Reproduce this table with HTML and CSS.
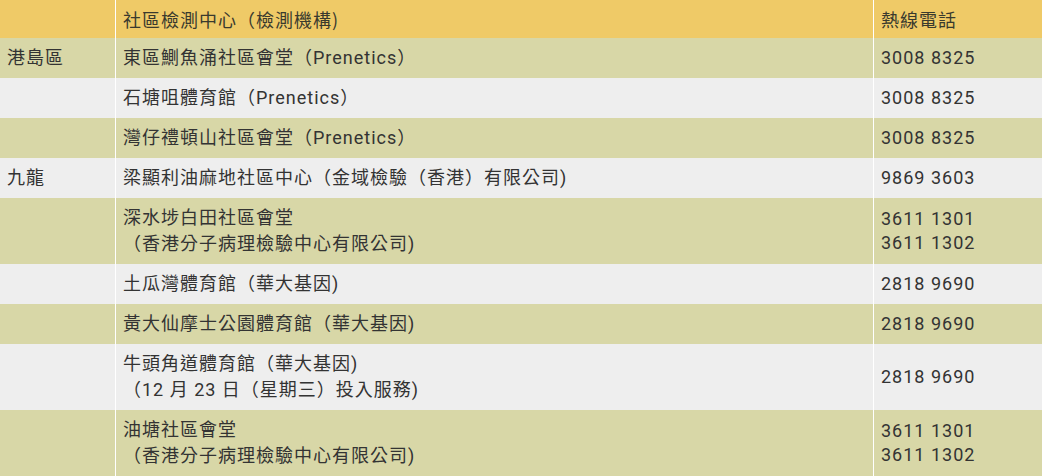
FILE: index.html
```html
<!DOCTYPE html>
<html lang="zh-Hant">
<head>
<meta charset="utf-8">
<title>社區檢測中心</title>
<link rel="stylesheet" href="styles.css">
</head>
<body>
<table class="centres">
  <colgroup>
    <col class="c-district">
    <col class="c-centre">
    <col class="c-phone">
  </colgroup>
  <thead>
    <tr class="head">
      <th></th>
      <th>社區檢測中心（檢測機構)</th>
      <th>熱線電話</th>
    </tr>
  </thead>
  <tbody>
    <tr class="odd">
      <td>港島區</td>
      <td>東區鰂魚涌社區會堂（Prenetics）</td>
      <td class="phone">3008 8325</td>
    </tr>
    <tr class="even">
      <td></td>
      <td>石塘咀體育館（Prenetics）</td>
      <td class="phone">3008 8325</td>
    </tr>
    <tr class="odd">
      <td></td>
      <td>灣仔禮頓山社區會堂（Prenetics）</td>
      <td class="phone">3008 8325</td>
    </tr>
    <tr class="even">
      <td>九龍</td>
      <td>梁顯利油麻地社區中心（金域檢驗（香港）有限公司)</td>
      <td class="phone">9869 3603</td>
    </tr>
    <tr class="odd">
      <td></td>
      <td>深水埗白田社區會堂<br>（香港分子病理檢驗中心有限公司)</td>
      <td class="phone">3611 1301<br>3611 1302</td>
    </tr>
    <tr class="even">
      <td></td>
      <td>土瓜灣體育館（華大基因)</td>
      <td class="phone">2818 9690</td>
    </tr>
    <tr class="odd">
      <td></td>
      <td>黃大仙摩士公園體育館（華大基因)</td>
      <td class="phone">2818 9690</td>
    </tr>
    <tr class="even">
      <td></td>
      <td>牛頭角道體育館（華大基因)<br>（12 月 23 日（星期三）投入服務)</td>
      <td class="phone">2818 9690</td>
    </tr>
    <tr class="odd">
      <td></td>
      <td>油塘社區會堂<br>（香港分子病理檢驗中心有限公司)</td>
      <td class="phone">3611 1301<br>3611 1302</td>
    </tr>
  </tbody>
</table>
</body>
</html>
```

FILE: styles.css
```css
html, body {
  margin: 0;
  padding: 0;
  background: #eeeeee;
}

.centres {
  width: 1042px;
  table-layout: fixed;
  border-collapse: separate;
  border-spacing: 0;
  font-family: Roboto, "Noto Sans CJK TC", sans-serif;
  font-size: 18px;
  line-height: 26px;
  letter-spacing: 1px;
  color: #333333;
}

.c-district { width: 115px; }
.c-centre { width: 758px; }
.c-phone { width: 169px; }

.centres th,
.centres td {
  padding: 7px 7px;
  text-align: left;
  vertical-align: middle;
  font-weight: normal;
}

.centres td.phone {
  line-height: 24px;
}

.centres th + th,
.centres td + td {
  border-left: 1px solid #ffffff;
}

.head th {
  background: #efca67;
  font-family: "Noto Sans CJK TC", sans-serif;
  line-height: 24px;
  color: #3a3a2e;
}

.odd td {
  background: #d8d7a7;
}

.even td {
  background: #eeeeee;
}
```
